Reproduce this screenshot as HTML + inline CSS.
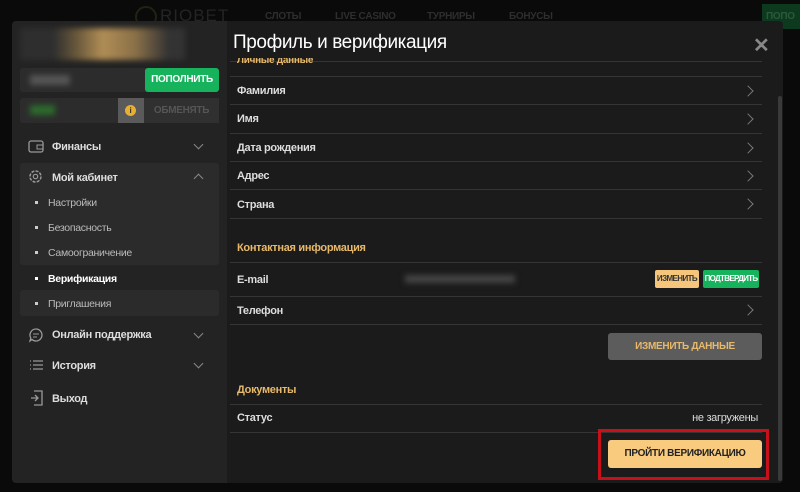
<!DOCTYPE html>
<html><head><meta charset="utf-8"><style>
*{margin:0;padding:0;box-sizing:border-box}
body{width:800px;height:492px;background:#0a0a0a;font-family:"Liberation Sans",sans-serif;position:relative;overflow:hidden;color:#ddd;letter-spacing:-0.3px}
.a{position:absolute}
.nav{color:#2e2e2e;font-size:10px;font-weight:bold;top:11px}
.lp{left:12px;top:21px;width:215px;height:462px;background:#232323;border-radius:4px 0 0 4px}
.rp{left:227px;top:21px;width:556px;height:462px;background:#1b1b1b;border-radius:0 4px 4px 0}
.t{font-size:11px;color:#ddd;font-weight:bold;top:0}
.line{height:1px;background:#353535;left:230px;width:532px}
.gold{color:#e8b96a;font-size:11px;font-weight:bold}
.chev{width:8px;height:8px;border-right:1.3px solid #777;border-top:1.3px solid #777;transform:rotate(45deg);left:744px}
.dn{width:7px;height:7px;border-right:1.5px solid #888;border-bottom:1.5px solid #888;transform:rotate(45deg);left:195px}
.up{width:7px;height:7px;border-left:1.5px solid #888;border-top:1.5px solid #888;transform:rotate(45deg);left:195px}
.mi{font-size:11px;font-weight:bold;color:#ddd;left:52px}
.si{font-size:10.5px;color:#bbb;left:48px}
.dot{width:3px;height:3px;background:#ccc;left:35px}
</style></head><body>
<div class="a" style="left:135px;top:6px;width:22px;height:22px;border-radius:50%;border:2px solid #222214"></div>
<div class="a" style="left:160px;top:6px;font-size:17px;color:#242424;letter-spacing:1px">RIOBET</div>
<div class="a nav" style="left:265px">СЛОТЫ</div>
<div class="a nav" style="left:335px">LIVE CASINO</div>
<div class="a nav" style="left:427px">ТУРНИРЫ</div>
<div class="a nav" style="left:509px">БОНУСЫ</div>
<div class="a" style="left:762px;top:4px;width:40px;height:25px;background:#0d3a1f;color:#2a5a3a;font-size:10px;padding:7px 4px;font-weight:bold">ПОПО</div>
<div class="a lp"></div>
<div class="a rp"></div>
<div class="a" style="left:20px;top:28px;width:165px;height:32px;background:linear-gradient(90deg,#2e2e2e 20%,#6b5a3c 35%,#b08d55 50%,#8a7048 70%,#333 90%);filter:blur(3px)"></div>
<div class="a" style="left:20px;top:68px;width:199px;height:24px;background:#2c2c2c;border-radius:3px"></div>
<div class="a" style="left:30px;top:75px;width:40px;height:10px;background:#555;filter:blur(3px)"></div>
<div class="a" style="left:145px;top:68px;width:74px;height:24px;background:#16b35c;border-radius:3px;color:#fff;font-size:10px;font-weight:bold;text-align:center;line-height:24px">ПОПОЛНИТЬ</div>
<div class="a" style="left:20px;top:98px;width:199px;height:25px;background:#2c2c2c;border-radius:3px"></div>
<div class="a" style="left:30px;top:105px;width:25px;height:10px;background:#2d6a2d;filter:blur(3px)"></div>
<div class="a" style="left:118px;top:98px;width:26px;height:25px;background:#5a5a5a"></div>
<div class="a" style="left:125px;top:105px;width:11px;height:11px;border-radius:50%;background:#e8b030;color:#333;font-size:8px;font-weight:bold;text-align:center;line-height:11px">i</div>
<div class="a" style="left:144px;top:98px;width:75px;height:25px;background:#303030;color:#555;font-size:10px;font-weight:bold;text-align:center;line-height:25px">ОБМЕНЯТЬ</div>
<svg class="a" style="left:28px;top:139px" width="16" height="14"><rect x="1" y="2" width="14" height="11" rx="2" fill="none" stroke="#999" stroke-width="1.3"/><rect x="9" y="6" width="6" height="4" fill="none" stroke="#999"/></svg>
<div class="a mi" style="top:141px">Финансы</div>
<div class="a dn" style="top:141px"></div>
<div class="a" style="left:20px;top:163px;width:199px;height:102px;background:#2b2b2b;border-radius:3px"></div>
<div class="a" style="left:20px;top:290px;width:199px;height:26px;background:#2b2b2b;border-radius:3px"></div>
<svg class="a" style="left:28px;top:169px" width="15" height="15"><circle cx="7.5" cy="7.5" r="5.5" fill="none" stroke="#999" stroke-width="1.5" stroke-dasharray="3 1.3"/><circle cx="7.5" cy="7.5" r="2.2" fill="none" stroke="#999" stroke-width="1.2"/></svg>
<div class="a mi" style="top:172px">Мой кабинет</div>
<div class="a up" style="top:175px"></div>
<div class="a dot" style="top:201px"></div><div class="a si" style="top:197px">Настройки</div>
<div class="a dot" style="top:226px"></div><div class="a si" style="top:222px">Безопасность</div>
<div class="a dot" style="top:251px"></div><div class="a si" style="top:247px">Самоограничение</div>
<div class="a dot" style="top:277px;background:#fff"></div><div class="a si" style="top:273px;color:#fff;font-weight:bold">Верификация</div>
<div class="a dot" style="top:302px"></div><div class="a si" style="top:298px">Приглашения</div>
<svg class="a" style="left:28px;top:327px" width="16" height="16"><path d="M8 2a6 6 0 1 1-4 10.5L2 14l.8-3A6 6 0 0 1 8 2z" fill="none" stroke="#999" stroke-width="1.3"/><path d="M5 7h6M5 10h4" stroke="#999"/></svg>
<div class="a mi" style="top:329px">Онлайн поддержка</div>
<div class="a dn" style="top:330px"></div>
<svg class="a" style="left:29px;top:359px" width="15" height="12"><path d="M1 2h1M1 6h1M1 10h1M4 2h10M4 6h10M4 10h10" stroke="#999" stroke-width="1.2"/></svg>
<div class="a mi" style="top:360px">История</div>
<div class="a dn" style="top:360px"></div>
<svg class="a" style="left:30px;top:390px" width="14" height="16"><path d="M4 1h8v14H4M1 8h7M5 5l3 3-3 3" fill="none" stroke="#999" stroke-width="1.3"/></svg>
<div class="a mi" style="top:393px">Выход</div>

<div class="a" style="left:233px;top:32px;font-size:19px;color:#fff;letter-spacing:-0.4px">Профиль и верификация</div>
<div class="a" style="left:753px;top:33px;font-size:20px;color:#888;font-weight:bold">✕</div>
<div class="a line" style="top:61px"></div>
<div class="a gold" style="left:237px;top:58px;height:10px;overflow:hidden;line-height:6px;font-size:10px">Личные данные</div>
<div class="a line" style="top:76px"></div>
<div class="a t" style="left:237px;top:85px">Фамилия</div><div class="a chev" style="top:87px"></div>
<div class="a line" style="top:104px"></div>
<div class="a t" style="left:237px;top:113px">Имя</div><div class="a chev" style="top:115px"></div>
<div class="a line" style="top:133px"></div>
<div class="a t" style="left:237px;top:142px">Дата рождения</div><div class="a chev" style="top:144px"></div>
<div class="a line" style="top:161px"></div>
<div class="a t" style="left:237px;top:170px">Адрес</div><div class="a chev" style="top:172px"></div>
<div class="a line" style="top:189px"></div>
<div class="a t" style="left:237px;top:199px">Страна</div><div class="a chev" style="top:200px"></div>
<div class="a line" style="top:218px"></div>
<div class="a gold" style="left:237px;top:242px">Контактная информация</div>
<div class="a line" style="top:262px"></div>
<div class="a t" style="left:237px;top:274px">E-mail</div>
<div class="a" style="left:405px;top:275px;width:110px;height:8px;background:#444;filter:blur(3px)"></div>
<div class="a" style="left:655px;top:270px;width:44px;height:18px;background:#f6c57c;border-radius:2px;color:#333;font-size:8px;font-weight:bold;text-align:center;line-height:18px;letter-spacing:-0.6px">ИЗМЕНИТЬ</div>
<div class="a" style="left:703px;top:270px;width:56px;height:18px;background:#16b35c;border-radius:2px;color:#fff;font-size:8px;font-weight:bold;text-align:center;line-height:18px;letter-spacing:-0.7px">ПОДТВЕРДИТЬ</div>
<div class="a line" style="top:296px"></div>
<div class="a t" style="left:237px;top:305px">Телефон</div><div class="a chev" style="top:306px"></div>
<div class="a line" style="top:324px"></div>
<div class="a" style="left:608px;top:333px;width:154px;height:27px;background:#5c5c5c;border-radius:3px;color:#e8b96a;font-size:10px;font-weight:bold;text-align:center;line-height:27px">ИЗМЕНИТЬ ДАННЫЕ</div>
<div class="a gold" style="left:237px;top:384px">Документы</div>
<div class="a line" style="top:404px"></div>
<div class="a t" style="left:237px;top:412px">Статус</div>
<div class="a t" style="left:600px;width:158px;text-align:right;top:412px;font-weight:normal;color:#ddd">не загружены</div>
<div class="a line" style="top:432px"></div>
<div class="a" style="left:598px;top:429px;width:171px;height:51px;border:3px solid #c8101a"></div>
<div class="a" style="left:608px;top:440px;width:154px;height:28px;background:#f9cb7f;border-radius:3px;color:#222;font-size:10px;font-weight:bold;text-align:center;line-height:28px">ПРОЙТИ ВЕРИФИКАЦИЮ</div>
<div class="a" style="left:778px;top:96px;width:4px;height:385px;background:#3a3a3a;border-radius:2px"></div>
</body></html>
